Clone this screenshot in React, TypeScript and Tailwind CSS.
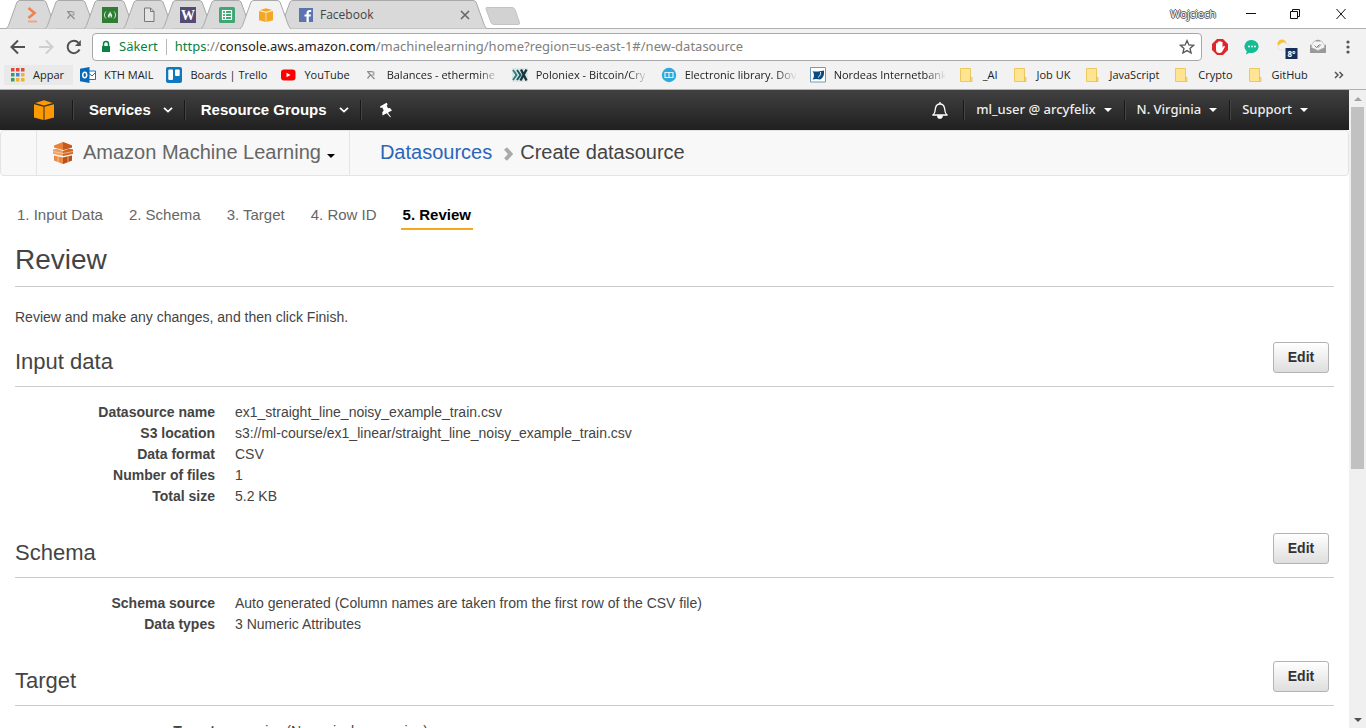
import React, { type ReactNode } from "react";

const uiFont = "font-['Open_Sans','Noto_Sans',sans-serif]";
const wideUiFont = "font-['Noto_Sans','Open_Sans',sans-serif]";

/* ---------- favicons ---------- */

function EthermineIcon() {
  return (
    <svg viewBox="0 0 16 16" className="size-4 shrink-0" fill="none" stroke="#8f8f8f" strokeWidth="1.300">
      <path d="M4 4.600h5.500M5 5.200 11.500 12M7.300 7.800 4.500 11.500" />
      <path d="M9 5.200h1.800v2.600H8.500" stroke="#a5a5a5" />
    </svg>
  );
}

function TabArrowIcon() {
  return (
    <svg viewBox="0 0 16 16" className="size-4" fill="none" stroke="#f0824f">
      <path d="m4.500 1 6 5-6 5" strokeWidth="2.600" />
      <path d="M4 14.500h9" strokeWidth="1.800" stroke="#f3a27d" />
    </svg>
  );
}

function CampIcon() {
  return (
    <svg viewBox="0 0 16 16" className="size-4">
      <path d="M0 0h16v16H0z" fill="#2f7d32" />
      <path d="M4 4.500C2 6.500 2 9.500 4 11.500M12 4.500c2 2 2 5 0 7" fill="none" stroke="#d8ecd8" />
      <path d="M8 4c.3 2 2.400 2.700 2.200 5-.1 1-.8 1.700-1.600 2 .4-.9.2-1.700-.6-2.400-.2 1-.9 1.300-.5 2.400-1-.3-1.700-1-1.700-2C5.800 7.300 8 6.500 8 4z" fill="#d8ecd8" />
    </svg>
  );
}

function PageIcon() {
  return (
    <svg viewBox="0 0 16 16" className="size-4" fill="#e4e4e4" stroke="#777">
      <path d="M3.500 1h6l3.500 3.500v10H3.500z" />
      <path d="M9.500 1v3.500H13" fill="none" />
    </svg>
  );
}

function WIcon() {
  return (
    <svg viewBox="0 0 16 16" className="size-4">
      <path d="M0 0h16v16H0z" fill="#554a76" />
      <text x="8" y="12.500" textAnchor="middle" fontFamily="Liberation Serif, serif" fontWeight="700" fontSize="14" fill="#fff">W</text>
    </svg>
  );
}

function SheetsIcon() {
  return (
    <svg viewBox="0 0 16 16" className="size-4">
      <rect width="16" height="16" rx="1.500" fill="#3fa773" />
      <path d="M3.500 3.500h9v9h-9zM3.500 6.500h9M3.500 9.500h9M6.500 3.500v9" fill="none" stroke="#fff" strokeWidth="1.200" />
    </svg>
  );
}

function CubeIcon({ className }: { className: string }) {
  return (
    <svg viewBox="0 0 20 20" className={className}>
      <path d="M1.300 2.900 10 .2l8.700 2.700L10 5.400z" />
      <path d="M0 4.300 9.500 6.700V20L0 17.600zM20 4.300l-9.500 2.400V20l9.500-2.400z" />
    </svg>
  );
}

function FacebookIcon() {
  return (
    <svg viewBox="0 0 16 16" className="size-4">
      <path d="M1 1h14v14H1z" fill="#5b74ad" />
      <path d="M8.500 15V9.500h-2v-2h2V6c0-2 1.200-3 3-3h1.700v2h-1.300c-.8 0-1.100.4-1.100 1.100v1.400H13l-.3 2h-1.900V15z" fill="#fff" />
    </svg>
  );
}

function AppsIcon() {
  const colors = ["#dd4b3e", "#dd4b3e", "#dd4b3e", "#3d9b5f", "#4a7fe0", "#edb52e", "#3d9b5f", "#edb52e", "#edb52e"];
  return (
    <svg viewBox="0 0 14 14" className="size-[14px] shrink-0">
      {colors.map((c, i) => (
        <rect key={i} x={(i % 3) * 5} y={Math.floor(i / 3) * 5} width="3.500" height="3.500" fill={c} />
      ))}
    </svg>
  );
}

function OutlookIcon() {
  return (
    <svg viewBox="0 0 16 16" className="size-4 shrink-0">
      <path d="M8.500 4h7v8.500h-7z" fill="#fff" stroke="#1a73c0" />
      <path d="m8.500 6 3.500 3 3.500-3.500" fill="none" stroke="#1a73c0" />
      <path d="M0 1.800 9.500 0v16L0 14.200z" fill="#0a68b8" />
      <ellipse cx="4.700" cy="8" rx="2" ry="2.700" fill="none" stroke="#fff" strokeWidth="1.500" />
    </svg>
  );
}

function TrelloIcon() {
  return (
    <svg viewBox="0 0 16 16" className="size-4 shrink-0">
      <rect width="16" height="16" rx="2" fill="#0f79bf" />
      <rect x="2.300" y="2.500" width="4.700" height="10.500" rx="1" fill="#fff" />
      <rect x="9" y="2.500" width="4.700" height="6.500" rx="1" fill="#fff" />
    </svg>
  );
}

function YouTubeIcon() {
  return (
    <svg viewBox="0 0 16 16" className="size-4 shrink-0">
      <rect x="1" y="2.500" width="14.500" height="11" rx="3" fill="#f00" />
      <path d="M6.500 5.700 10.500 8l-4 2.300z" fill="#fff" />
    </svg>
  );
}

function PoloniexIcon() {
  return (
    <svg viewBox="0 0 16 16" className="size-4 shrink-0" fill="none">
      <path d="M0 1h16v14H0z" fill="#dfe6e6" />
      <path d="m1 3 3.500 5L1 13" stroke="#2f7f85" strokeWidth="2" />
      <path d="m5 3 3.500 5L5 13" stroke="#1d5960" strokeWidth="2" />
      <path d="m14.500 2.500-6 11M9 2.500l5.500 11" stroke="#17373d" strokeWidth="2.400" />
    </svg>
  );
}

function LibraryIcon() {
  return (
    <svg viewBox="0 0 16 16" className="size-4 shrink-0">
      <circle cx="8" cy="8" r="7.200" fill="#2fa9dc" />
      <path d="M4 5.500h4v5H4zM8 5.500h4v5H8z" fill="none" stroke="#d9f2fc" strokeWidth="1.200" />
    </svg>
  );
}

function NordeaIcon() {
  return (
    <svg viewBox="0 0 16 16" className="size-4 shrink-0">
      <path d="M.5.500h15v14.500H.5z" fill="#fff" stroke="#6d9dbd" />
      <path d="M2.500 4c2 .8 4 .4 5.500.4C10 4 12 4 14 3.500V7c-.5 3-2 4.500-4 5.500-2.500-.8-5-.8-7.500 0C4.500 10 4.500 7 2.500 4z" fill="#0b4c80" />
      <path d="M10.500 5c.5 2-.5 4-2.500 5.500" stroke="#fff" strokeWidth=".9" fill="none" />
    </svg>
  );
}

function FolderIcon() {
  return (
    <svg viewBox="0 0 16 16" className="size-4 shrink-0">
      <path d="M1.500 1.500h10v13h-10z" fill="#ffe591" stroke="#ecc95c" />
      <path d="M11.500 10.500H13v4h-1.500z" fill="#ffe591" stroke="#e4bd4c" strokeWidth=".8" />
    </svg>
  );
}

/* ---------- browser frame ---------- */

function Tab({ width, active, label, children }: { width: number; active?: boolean; label: string; children: ReactNode }) {
  const w = width;
  return (
    <button
      type="button"
      aria-label={label}
      className={`relative -mr-3 flex h-full shrink-0 items-center ${active ? "z-10" : ""}`}
      style={{ width: w }}
    >
      <svg viewBox={`0 0 ${w} 29`} className="absolute inset-0 size-full">
        <path
          d={`M0 28.500 Q1.500 28 2.500 25.500 L11 2 Q12 .5 14 .5 H${w - 14} Q${w - 12} .5 ${w - 11} 2 L${w - 2.5} 25.500 Q${w - 1.5} 28 ${w} 28.500`}
          fill={active ? "#f2f2f2" : "#d9d9d9"}
          stroke="#a9a9a9"
        />
        {active && <path d={`M1 28.500H${w - 1}`} stroke="#f2f2f2" />}
      </svg>
      {children}
    </button>
  );
}

function SmallTab({ label, active, children }: { label: string; active?: boolean; children: ReactNode }) {
  return (
    <Tab width={51} label={label} active={active}>
      <span className="relative flex w-full justify-center">{children}</span>
    </Tab>
  );
}

function TabStrip() {
  return (
    <div className="flex h-[29px] shrink-0 items-stretch border-b border-[#b0b0b0] bg-white pl-1.5">
      <div className="-mb-px flex">
        <SmallTab label="Tab 1"><TabArrowIcon /></SmallTab>
        <SmallTab label="Ethermine"><EthermineIcon /></SmallTab>
        <SmallTab label="freeCodeCamp"><CampIcon /></SmallTab>
        <SmallTab label="Document"><PageIcon /></SmallTab>
        <SmallTab label="Wikipedia"><WIcon /></SmallTab>
        <SmallTab label="Sheets"><SheetsIcon /></SmallTab>
        <SmallTab label="Amazon Machine Learning" active><CubeIcon className="size-[14px] fill-[#f5a623]" /></SmallTab>
        <Tab width={208} label="Facebook">
          <span className="relative flex w-full items-center gap-1.5 pr-[17px] pl-[19px]">
            <FacebookIcon />
            <span className={`grow text-left text-xs text-[#444] ${uiFont}`}>Facebook</span>
            <svg viewBox="0 0 10 10" className="size-2.5" stroke="#666" strokeWidth="1.600">
              <path d="m1 1 8 8M9 1 1 9" />
            </svg>
          </span>
        </Tab>
      </div>
      <button type="button" aria-label="New tab" className="ml-2.5 self-center pt-1">
        <svg viewBox="0 0 36 18" className="h-[18px] w-9">
          <path d="M2 .5h25q2 0 3 2l4.500 13q.5 2-1.500 2H9q-2 0-3-2L1 2Q.5.500 2 .5z" fill="#d2d2d2" stroke="#c3c3c3" />
        </svg>
      </button>
      <div className="ml-auto flex items-center">
        <span
          className={`mr-[30px] text-[11px] text-white [text-shadow:1px_0_#555,-1px_0_#555,0_1px_#555,0_-1px_#555] ${uiFont}`}
        >
          Wojciech
        </span>
        <svg viewBox="0 0 100 12" className="mr-5 h-3 w-[100px]" fill="none" stroke="#111">
          <path d="M0 5.500h10" />
          <path d="M44.500 3.500h7v7h-7zM46.500 3.500v-2h7v7h-2" />
          <path d="m90.500 1 9 10M99.500 1l-9 10" />
        </svg>
      </div>
    </div>
  );
}

function Toolbar() {
  return (
    <div className="flex h-9 shrink-0 items-center bg-[#f2f2f2]">
      <div className="flex w-[92px] shrink-0 items-center gap-3 pl-2.5">
        <button type="button" aria-label="Back">
          <svg viewBox="0 0 16 16" className="size-4" fill="none" stroke="#505050" strokeWidth="2">
            <path d="M8 1.500 1.500 8 8 14.500M2 8h13" />
          </svg>
        </button>
        <button type="button" aria-label="Forward">
          <svg viewBox="0 0 16 16" className="size-4" fill="none" stroke="#cfcfcf" strokeWidth="2">
            <path d="M8 1.500 14.500 8 8 14.500M14 8H1" />
          </svg>
        </button>
        <button type="button" aria-label="Reload">
          <svg viewBox="0 0 16 16" className="size-4" fill="none" stroke="#505050" strokeWidth="2">
            <path d="M13.500 10.500A6.200 6.200 0 1 1 12.500 3.800" />
            <path d="M14.800 1v6H9z" fill="#505050" stroke="none" />
          </svg>
        </button>
      </div>
      <div className={`flex h-7 grow items-center rounded-sm border border-[#a8a8a8] bg-white pr-1.5 pl-2 text-[13px] ${wideUiFont}`}>
        <svg viewBox="0 0 10 14" className="h-3.5 w-2.5">
          <path d="M1 6h8v6H1z" fill="#0b8043" />
          <path d="M2.500 6.500V4a2.500 2.500 0 0 1 5 0v2.500" fill="none" stroke="#0b8043" strokeWidth="1.500" />
        </svg>
        <span className="ml-2 text-[#0b8043]">Säkert</span>
        <span className="mx-2 h-4 w-px bg-[#b8b8b8]" />
        <span className="grow whitespace-nowrap text-[#808080]">
          <span className="text-[#0b8043]">https</span>://<span className="text-[#222]">console.aws.amazon.com</span>
          /machinelearning/home?region=us-east-1#/new-datasource
        </span>
        <svg viewBox="0 0 16 16" className="size-4" fill="none" stroke="#555" strokeWidth="1.300">
          <path d="m8 1.600 1.900 4.300 4.700.4-3.600 3.100 1.100 4.600L8 11.600 3.900 14 5 9.400 1.400 6.300l4.700-.4z" />
        </svg>
      </div>
      <div className="flex shrink-0 items-center gap-4 pr-4 pl-2.5">
        <svg viewBox="0 0 16 16" className="size-4">
          <path d="M5 0h6l5 5v6l-5 5H5l-5-5V5z" fill="#e0262d" />
          <path d="M4 8V4.500q.8-.9 1.600 0V3q.8-.9 1.600 0v-.5q.9-.8 1.700 0V3q.9-.7 1.600.2V8.500l1.200-1.400q1.400-.3 1.100.9l-2.200 4q-.8 2-2.900 2Q4 14 4 10.500z" fill="#fff" />
        </svg>
        <svg viewBox="0 0 16 16" className="size-4">
          <path d="M8 1a7 6.500 0 1 1-2.500 12.700L2 15.500l.8-3.200A7 6.500 0 0 1 8 1z" fill="#13bd94" />
          <circle cx="5" cy="7.500" r=".9" fill="#fff" />
          <circle cx="8" cy="7.500" r=".9" fill="#fff" />
          <circle cx="11" cy="7.500" r=".9" fill="#fff" />
        </svg>
        <svg viewBox="0 0 22 20" className="-mr-1 -mb-1 h-5 w-[22px]">
          <circle cx="6" cy="5" r="4.500" fill="#f9c22e" />
          <path d="M3 11a3 3 0 0 1 1-5.500 4 4 0 0 1 7 0A3 3 0 0 1 13 11z" fill="#f1f2f4" stroke="#dcdee3" strokeWidth=".6" />
          <path d="M9.500 9h12v11h-12z" fill="#1c2b59" />
          <text x="15.500" y="17.500" textAnchor="middle" fontSize="8" fontWeight="700" fontFamily="Open Sans, sans-serif" fill="#fff">8°</text>
        </svg>
        <svg viewBox="0 0 16 16" className="size-4">
          <path d="M0 5.500 8 9l8-3.500V14H0z" fill="#999" />
          <path d="M1.500 6 4.500 2h7l3 4v2.500L8 11.500 1.500 8.500z" fill="#f4f4f4" stroke="#b5b5b5" strokeWidth=".7" />
          <path d="M5 2.200Q8-.5 11 2.200z" fill="#999" />
          <path d="m4.500 6.500 2 2 3-3M7.500 8 8 8.500l3-3" fill="none" stroke="#777" strokeWidth=".9" />
        </svg>
        <svg viewBox="0 0 4 14" className="ml-1 h-3.5 w-1" fill="#555">
          <circle cx="2" cy="2" r="1.600" />
          <circle cx="2" cy="7" r="1.600" />
          <circle cx="2" cy="12" r="1.600" />
        </svg>
      </div>
    </div>
  );
}

function Bookmark({ icon, label, className = "" }: { icon: ReactNode; label: string; className?: string }) {
  return (
    <a href="#" className={`flex shrink-0 items-center gap-2 whitespace-nowrap ${className}`}>
      {icon}
      {label}
    </a>
  );
}

const fade = "w-[136px] mask-r-from-85%";

function BookmarksBar() {
  return (
    <nav className={`flex h-[25px] shrink-0 items-center gap-[13px] border-b border-[#b0b0b0] bg-[#f2f2f2] pb-1 pl-1 text-[11px] text-[#222] ${uiFont}`}>
      <a href="#" className="-mr-1.5 flex h-5 w-[69px] shrink-0 items-center gap-2 bg-[#e9e9e9] pl-[7px]">
        <AppsIcon />
        Appar
      </a>
      <Bookmark icon={<OutlookIcon />} label="KTH MAIL" />
      <Bookmark icon={<TrelloIcon />} label="Boards | Trello" />
      <Bookmark icon={<YouTubeIcon />} label="YouTube" />
      <Bookmark icon={<EthermineIcon />} label="Balances - ethermine" className={fade} />
      <Bookmark icon={<PoloniexIcon />} label="Poloniex - Bitcoin/Cry" className={fade} />
      <Bookmark icon={<LibraryIcon />} label="Electronic library. Dov" className={fade} />
      <Bookmark icon={<NordeaIcon />} label="Nordeas Internetbank" className={fade} />
      <div className="flex shrink-0 gap-[15px]">
        <Bookmark icon={<FolderIcon />} label="_AI" />
        <Bookmark icon={<FolderIcon />} label="Job UK" />
        <Bookmark icon={<FolderIcon />} label="JavaScript" />
        <Bookmark icon={<FolderIcon />} label="Crypto" />
        <Bookmark icon={<FolderIcon />} label="GitHub" />
      </div>
      <button type="button" aria-label="More bookmarks" className="mr-[22px] ml-auto">
        <svg viewBox="0 0 10 8" className="h-2 w-2.5" fill="none" stroke="#555" strokeWidth="1.500">
          <path d="m1 1 3 3-3 3M5.500 1l3 3-3 3" />
        </svg>
      </button>
    </nav>
  );
}

/* ---------- console header ---------- */

function Chevron() {
  return (
    <svg viewBox="0 0 10 6" className="h-1.5 w-2.5" fill="none" stroke="#fff" strokeWidth="1.800">
      <path d="m1 .8 4 3.800L9 .8" />
    </svg>
  );
}

function Caret({ className = "fill-white" }: { className?: string }) {
  return (
    <svg viewBox="0 0 8 4" className={`h-1 w-2 ${className}`}>
      <path d="M0 0h8L4 4z" />
    </svg>
  );
}

function Divider() {
  return <span className="h-5 w-px shrink-0 bg-[#171717] shadow-[1px_0_0_#444]" />;
}

function ConsoleNav() {
  return (
    <nav className="flex h-10 shrink-0 items-center bg-linear-to-b from-[#414141] to-[#202020] text-white">
      <a href="#" aria-label="Console home" className="mr-[18px] ml-[34px]">
        <CubeIcon className="size-5 fill-[#ff9900]" />
      </a>
      <Divider />
      <button type="button" className="flex items-center gap-3 pr-[11px] pl-4 text-[15px] font-bold">
        Services <Chevron />
      </button>
      <Divider />
      <button type="button" className="flex items-center gap-3 pr-[11px] pl-4 text-[15px] font-bold">
        Resource Groups <Chevron />
      </button>
      <Divider />
      <button type="button" aria-label="Pin shortcuts" className="ml-[18px]">
        <svg viewBox="0 0 14 16" className="h-4 w-3.5" fill="#fff">
          <path d="M1 4.500 7.500.8l1.200 1.500-1 1.200 1.300 2.700 2-.2 2 2.500-2.500 1.200-1.500 1 3 4.300-.8.3-3.500-4L3.500 13.500l-.2-3.200 1.400-1.700-1.400-3L1.500 6z" />
        </svg>
      </button>
      <div className={`ml-auto flex items-center text-[13px] font-medium text-[#eee] ${wideUiFont}`}>
        <button type="button" aria-label="Notifications" className="mr-3.5">
          <svg viewBox="0 0 18 18" className="size-[18px]" fill="none" stroke="#fff" strokeWidth="1.300">
            <path d="M1.800 14c3-2 2-4.500 2.700-7Q5.300 3 9 3t4.500 4c.7 2.500-.3 5 2.700 7z" strokeLinejoin="round" />
            <path d="M9 1v2" />
            <path d="M6.800 15a2.200 2.200 0 0 0 4.400 0z" fill="#fff" />
          </svg>
        </button>
        <Divider />
        <button type="button" className="flex items-center gap-2 px-3">ml_user @ arcyfelix <Caret /></button>
        <Divider />
        <button type="button" className="flex items-center gap-2 px-3">N. Virginia <Caret /></button>
        <Divider />
        <button type="button" className="mr-[29px] flex items-center gap-2 px-3">Support <Caret /></button>
      </div>
    </nav>
  );
}

function MachineLearningIcon() {
  return (
    <svg viewBox="0 0 20 22" className="h-[22px] w-5">
      <path d="m10 0 9 3.500v2L10 8 1 5.500v-2z" fill="#e8823a" />
      <path d="m10 0 9 3.500v2L10 8z" fill="#c55a1c" />
      <path d="m0 7.500 4-.8L10 9l6-2.300 4 .8v4.300L10 14 0 11.800z" fill="#ef9d5e" />
      <path d="m10 9 6-2.300 4 .8v4.300L10 14z" fill="#cf6722" />
      <path d="m1 13.500 9 2 9-2v5L10 22l-9-3.500z" fill="#ea8a45" />
      <path d="m10 15.500 9-2v5L10 22z" fill="#b8521a" />
      <path d="M0 9.500 10 11.500l10-2M5 14v6M15 14v6" stroke="#fbe3d0" strokeWidth=".6" fill="none" />
    </svg>
  );
}

function ServiceBar() {
  return (
    <div className="flex h-[46px] shrink-0 items-stretch rounded-sm border border-[#e4e4e4] bg-[#f8f8f8] text-xl">
      <button type="button" className="ml-[35px] flex items-center gap-2.5 border-x border-[#e4e4e4] pr-3.5 pb-0.5 pl-4 text-[#666]">
        <span className="pt-0.5"><MachineLearningIcon /></span>
        <span className="-mr-1">Amazon Machine Learning</span>
        <span className="pt-2"><Caret className="fill-black" /></span>
      </button>
      <div className="flex items-center pb-0.5 pl-[30px]">
        <a href="#" className="text-[#2b65b8]">Datasources</a>
        <svg viewBox="0 0 10 14" className="mt-1 mr-1.5 ml-3 h-3.5 w-2.5" fill="none" stroke="#aaa" strokeWidth="4">
          <path d="m1.500 1.500 5 5.500-5 5.500" />
        </svg>
        <span className="text-[#444]">Create datasource</span>
      </div>
    </div>
  );
}

/* ---------- wizard ---------- */

const steps = ["1. Input Data", "2. Schema", "3. Target", "4. Row ID"];

type Row = [label: string, value: string];

function Section({ title, rows }: { title: string; rows: Row[] }) {
  return (
    <section className="mb-[26px]">
      <header className="flex h-[45px] items-start justify-between border-b border-[#ccc] pr-[5px]">
        <h2 className="mt-[5px] text-[22px] leading-[30px]">{title}</h2>
        <button
          type="button"
          className="h-[31px] w-14 rounded-[3px] border border-[#b3b3b3] bg-linear-to-b from-white to-[#dedede] pb-0.5 text-sm font-bold text-[#333]"
        >
          Edit
        </button>
      </header>
      <dl className="mt-[15px] grid grid-cols-[200px_1fr] gap-x-5 text-sm leading-[21px]">
        {rows.map(([label, value]) => (
          <React.Fragment key={label}>
            <dt className="text-right font-bold">{label}</dt>
            <dd>{value}</dd>
          </React.Fragment>
        ))}
      </dl>
    </section>
  );
}

function Wizard() {
  return (
    <main className="px-[15px] text-[#444]">
      <ol className="mt-[27px] flex gap-[22px] text-[15px] leading-6 text-[#666]">
        {steps.map((s) => (
          <li key={s} className="px-0.5">{s}</li>
        ))}
        <li aria-current="step" className="border-b-2 border-[#f5a81c] px-0.5 pb-px font-bold text-black">5. Review</li>
      </ol>
      <h1 className="mt-2.5 border-b border-[#ccc] pb-1.5 text-[28px] leading-10">Review</h1>
      <p className="mt-5 text-sm leading-[21px]">Review and make any changes, and then click Finish.</p>
      <div className="mt-3.5">
        <Section
          title="Input data"
          rows={[
            ["Datasource name", "ex1_straight_line_noisy_example_train.csv"],
            ["S3 location", "s3://ml-course/ex1_linear/straight_line_noisy_example_train.csv"],
            ["Data format", "CSV"],
            ["Number of files", "1"],
            ["Total size", "5.2 KB"],
          ]}
        />
        <Section
          title="Schema"
          rows={[
            ["Schema source", "Auto generated (Column names are taken from the first row of the CSV file)"],
            ["Data types", "3 Numeric Attributes"],
          ]}
        />
        <Section title="Target" rows={[["Target", "y_noisy (Numerical regression)"]]} />
      </div>
    </main>
  );
}

function Scrollbar() {
  return (
    <div aria-hidden="true" className="flex w-[17px] shrink-0 flex-col items-center bg-[#f0f0f0]">
      <div className="flex h-[17px] items-center">
        <svg viewBox="0 0 8 4" className="h-1 w-2" fill="#a3a3a3"><path d="M0 4h8L4 0z" /></svg>
      </div>
      <div className="flex w-[13px] grow flex-col">
        <div className="h-3/5 bg-[#c1c1c1]" />
      </div>
      <div className="flex h-[17px] items-center">
        <Caret className="fill-[#505050]" />
      </div>
    </div>
  );
}

export default function App() {
  return (
    <div className="flex h-screen flex-col overflow-hidden bg-white font-['Liberation_Sans',Arial,sans-serif]">
      <TabStrip />
      <Toolbar />
      <BookmarksBar />
      <div className="flex min-h-0 grow">
        <div className="flex min-w-0 grow flex-col overflow-hidden">
          <ConsoleNav />
          <ServiceBar />
          <Wizard />
        </div>
        <Scrollbar />
      </div>
    </div>
  );
}
